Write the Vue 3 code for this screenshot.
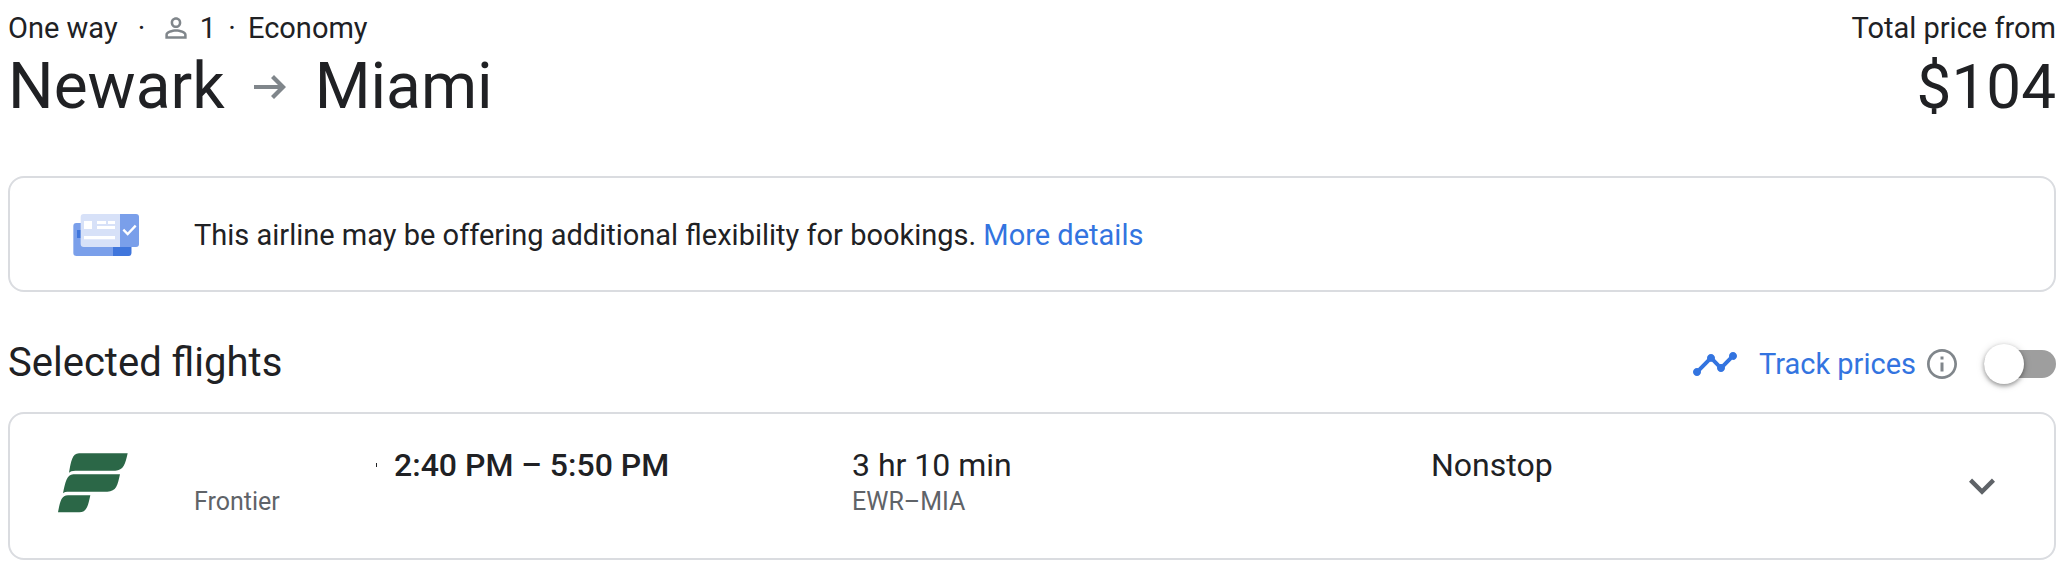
<script setup>
import { ref } from 'vue'

const trackPrices = ref(false)
const flight = {
  airline: 'Frontier',
  times: '2:40 PM – 5:50 PM',
  duration: '3 hr 10 min',
  route: 'EWR–MIA',
  stops: 'Nonstop',
}
</script>

<template>
  <main class="page">
    <header class="trip">
      <div>
        <p class="meta">
          <span class="kind">One way</span>
          <span class="sep">·</span>
          <span class="passengers">
            <svg class="person" viewBox="0 0 24 24" aria-hidden="true">
              <path d="M12 5.9a2.1 2.1 0 1 1 0 4.2 2.1 2.1 0 0 1 0-4.2m0 9c2.97 0 6.1 1.46 6.1 2.1v1.1H5.9V17c0-.64 3.13-2.1 6.1-2.1M12 4C9.79 4 8 5.79 8 8s1.79 4 4 4 4-1.79 4-4-1.79-4-4-4zm0 9c-2.67 0-8 1.34-8 4v3h16v-3c0-2.66-5.33-4-8-4z" />
            </svg>
            1
          </span>
          <span class="sep">·</span>
          <span>Economy</span>
        </p>
        <h1 class="route">
          <span>Newark</span>
          <svg class="arrow" viewBox="0 0 24 24" aria-hidden="true">
            <path d="M14 6l-1.500 1.500L16 11H4v2h12l-3.500 3.500L14 18l6-6z" />
          </svg>
          <span>Miami</span>
        </h1>
      </div>
      <div class="total">
        <p class="meta total-label">Total price from</p>
        <p class="price">$104</p>
      </div>
    </header>

    <section class="card notice">
      <svg class="tickets" viewBox="39 39 201 132" aria-hidden="true">
        <rect x="40" y="69" width="174" height="99" rx="9" fill="#7a9fea" />
        <path d="M159 130h55v29a9 9 0 0 1-9 9h-46z" fill="#4076dc" />
        <rect x="51" y="90" width="14" height="24" fill="#4076dc" />
        <path d="M71 42h109v99H71a9 9 0 0 1-9-9V51a9 9 0 0 1 9-9z" fill="#d7e1f8" />
        <path d="M180 42h48a9 9 0 0 1 9 9v81a9 9 0 0 1-9 9h-48z" fill="#7a9fea" />
        <path d="M72 63h24v24H72zM111 63h27v9h-27zM144 63h21v9h-21zM111 78h54v9h-54zM72 108h93v10H72z" fill="#fff" />
        <path d="M190 89l13 13 24-25" fill="none" stroke="#fff" stroke-width="7" />
      </svg>
      <p class="notice-text">
        This airline may be offering additional flexibility for bookings.
        <a href="#details">More details</a>
      </p>
    </section>

    <div class="section-head">
      <h2>Selected flights</h2>
      <div class="track">
        <svg class="trend" viewBox="0 0 24 24" aria-hidden="true">
          <path d="M23 8c0 1.1-.9 2-2 2-.18 0-.35-.02-.51-.07l-3.56 3.55c.05.16.07.34.07.52 0 1.1-.9 2-2 2s-2-.9-2-2c0-.18.02-.36.07-.52l-2.55-2.55c-.16.05-.34.07-.52.07s-.36-.02-.52-.07l-4.55 4.56c.05.16.07.33.07.51 0 1.1-.9 2-2 2s-2-.9-2-2 .9-2 2-2c.18 0 .35.02.51.07l4.56-4.55C8.02 9.36 8 9.18 8 9c0-1.1.9-2 2-2s2 .9 2 2c0 .18-.02.36-.07.52l2.55 2.55c.16-.05.34-.07.52-.07s.36.02.52.07l3.55-3.56C19.02 8.35 19 8.18 19 8c0-1.1.9-2 2-2s2 .9 2 2z" />
        </svg>
        <label for="track-prices">Track prices</label>
        <button class="icon-button info" type="button" aria-label="About price tracking">
          <svg viewBox="0 0 24 24" aria-hidden="true">
            <path d="M11 7h2v2h-2zm0 4h2v6h-2zm1-9C6.48 2 2 6.48 2 12s4.48 10 10 10 10-4.480 10-10S17.520 2 12 2zm0 18.200c-4.530 0-8.200-3.670-8.200-8.200S7.470 3.800 12 3.800s8.200 3.670 8.200 8.200-3.670 8.200-8.200 8.200z" />
          </svg>
        </button>
        <input id="track-prices" v-model="trackPrices" class="switch" type="checkbox" role="switch" />
      </div>
    </div>

    <section class="card flight">
      <div class="logo">
        <svg viewBox="24 36 210 183" role="img" aria-label="Frontier logo">
          <path d="M87 40H233C226 72 220 92 196 92H76C66 92 61 94 57 98C63 66 66 40 87 40Z" />
          <path d="M70 103H210C203 135 199 155 172 155H58C48 155 43 156 39 160C46 128 50 103 70 103Z" />
          <path d="M54 166H121C114 198 110 217 88 217H24C30 185 34 166 54 166Z" />
        </svg>
      </div>
      <div>
        <p class="primary times"><i class="tick"></i><span>{{ flight.times }}</span></p>
        <p class="secondary">{{ flight.airline }}</p>
      </div>
      <div>
        <p class="primary">{{ flight.duration }}</p>
        <p class="secondary">{{ flight.route }}</p>
      </div>
      <p class="primary">{{ flight.stops }}</p>
      <button class="icon-button expand" type="button" aria-label="Flight details">
        <svg viewBox="0 0 24 24" aria-hidden="true">
          <path d="M16.59 8.59L12 13.17 7.41 8.59 6 10l6 6 6-6z" />
        </svg>
      </button>
    </section>
  </main>
</template>

<style>
body {
  margin: 0;
  background: #fff;
}
</style>

<style scoped>
.page {
  padding: 8px 10px 14px 8px;
  color: #202124;
  font-family: Roboto, "Liberation Sans", sans-serif;
  font-size: 29px;
  line-height: 40px;
}
p, h1, h2 {
  margin: 0;
  font-weight: 400;
}
svg {
  display: block;
  flex: none;
}
.trip {
  display: flex;
  justify-content: space-between;
}
.meta {
  display: flex;
  align-items: center;
}
.kind {
  margin-right: 8px;
}
.sep {
  width: 32px;
  text-align: center;
}
.passengers {
  display: flex;
  align-items: center;
  gap: 8px;
  margin-left: 2px;
}
.person {
  width: 32px;
  height: 32px;
  fill: #80868b;
}
.route {
  display: flex;
  align-items: center;
  gap: 21px;
  font-size: 64px;
  line-height: 78px;
}
.arrow {
  width: 48px;
  height: 48px;
  fill: #80868b;
}
.total {
  text-align: right;
}
.total-label {
  justify-content: flex-end;
}
.price {
  font-size: 62px;
  line-height: 78px;
}
.card {
  box-sizing: border-box;
  border: 2px solid #dadce0;
  border-radius: 16px;
}
.notice {
  display: flex;
  align-items: center;
  margin-top: 50px;
  min-height: 116px;
  padding: 2px 63px 0;
}
.tickets {
  width: 67px;
  height: 44px;
  margin-right: 54px;
}
.notice-text a {
  color: #3374e0;
  text-decoration: none;
}
.section-head {
  display: flex;
  align-items: center;
  justify-content: space-between;
  margin: 44px 0 20px;
}
h2 {
  padding-bottom: 2px;
  font-size: 40px;
  line-height: 54px;
}
.track {
  display: flex;
  align-items: center;
  color: #3374e0;
}
.trend {
  width: 48px;
  height: 48px;
  margin-right: 20px;
  fill: #3374e0;
}
.icon-button {
  padding: 0;
  border: 0;
  background: none;
}
.info {
  margin: 0 24px 0 8px;
}
.info svg {
  width: 36px;
  height: 36px;
  fill: #80868b;
}
.switch {
  position: relative;
  width: 72px;
  height: 28px;
  margin: 0;
  border-radius: 14px;
  background: #9e9e9e;
  appearance: none;
}
.switch::before {
  position: absolute;
  top: -6px;
  left: 0;
  width: 40px;
  height: 40px;
  border-radius: 50%;
  background: #fff;
  box-shadow: 0 2px 4px rgba(0, 0, 0, 0.35), 0 1px 8px rgba(0, 0, 0, 0.15);
  content: "";
}
.switch:checked::before {
  left: 32px;
}
.flight {
  display: grid;
  grid-template-columns: 184px 658fr 579fr 525fr 52px;
  min-height: 148px;
  padding: 32px 46px 32px 0;
}
.logo {
  padding: 6px 0 0 48px;
}
.logo svg {
  width: 70px;
  height: 61px;
  fill: #2b6747;
}
.primary {
  font-size: 32px;
  line-height: 38px;
}
.times {
  display: flex;
  align-items: center;
  padding-left: 182px;
  font-weight: 500;
}
.tick {
  width: 1px;
  height: 4px;
  margin-right: 17px;
  background: #202124;
}
.secondary {
  color: #5f6368;
  font-size: 25px;
  line-height: 36px;
}
.expand {
  align-self: center;
}
.expand svg {
  width: 52px;
  height: 52px;
  fill: #5f6368;
}
</style>
